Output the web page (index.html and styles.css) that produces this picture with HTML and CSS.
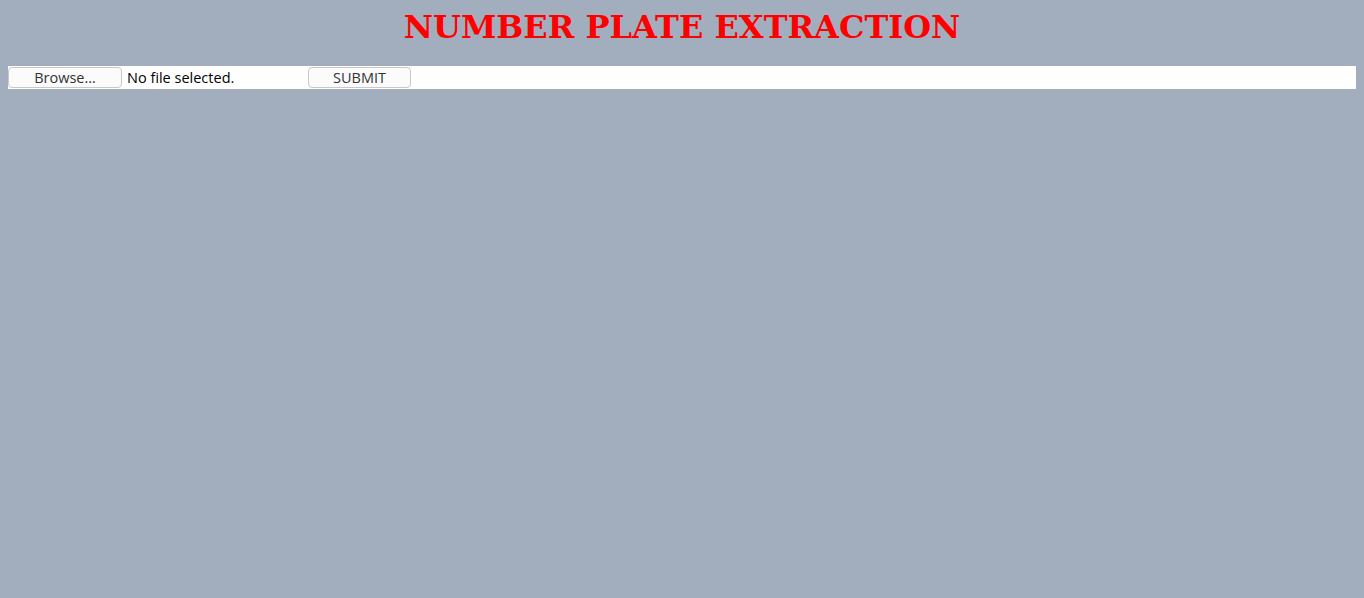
FILE: index.html
```html
<!DOCTYPE html>
<html>
<head>
<meta charset="utf-8">
<link rel="stylesheet" href="styles.css">
</head>
<body>
<h1 class="title">NUMBER PLATE EXTRACTION</h1>
<form class="upload">
  <div class="file">
    <span class="btn browse">Browse…</span>
    <span class="file-label">No file selected.</span>
  </div>
  <span class="btn submit">SUBMIT</span>
</form>
</body>
</html>
```
FILE: styles.css
```css
html, body { background: #a2aebe; }
body { margin: 8px; font-family: "Open Sans", "DejaVu Sans", sans-serif; }
.title {
  margin: 0 0 20px;
  text-align: center;
  font-family: "DejaVu Serif", serif;
  font-weight: bold;
  font-size: 32px;
  color: #ff0000;
}
.upload {
  background: #fff;
  height: 23px;
  margin-right: -2px;
  display: flex;
  align-items: center;
}
.file { width: 300px; display: flex; align-items: center; }
.btn {
  box-sizing: border-box;
  height: 21px;
  border: 1px solid #c8c8c8;
  border-radius: 4px;
  background: #fbfbfb;
  color: #333;
  font-size: 14.5px;
  display: flex;
  align-items: center;
  justify-content: center;
}
.browse { width: 114px; }
.file-label { margin-left: 5px; font-size: 14.5px; color: #000; }
.submit { width: 103px; }
```
